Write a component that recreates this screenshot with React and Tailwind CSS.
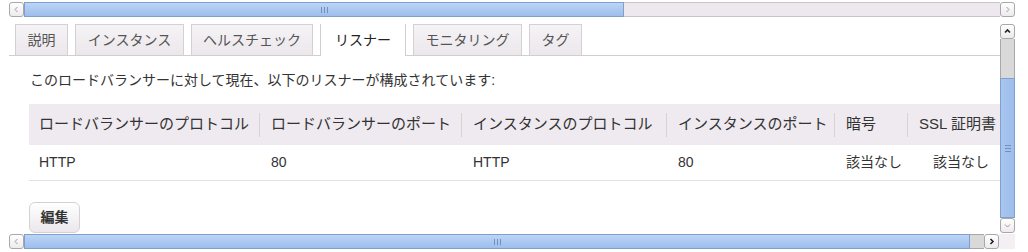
import React from 'react';

const tabs = [
  { label: '説明', w: 'w-[53px]' },
  { label: 'インスタンス', w: 'w-[109px]' },
  { label: 'ヘルスチェック', w: 'w-[122px]' },
  { label: 'リスナー', w: 'w-[86px]', active: true },
  { label: 'モニタリング', w: 'w-[109px]' },
  { label: 'タグ', w: 'w-[53px]' },
];

const headers = [
  'ロードバランサーのプロトコル',
  'ロードバランサーのポート',
  'インスタンスのプロトコル',
  'インスタンスのポート',
  '暗号',
  'SSL 証明書',
];

const row = ['HTTP', '80', 'HTTP', '80', '該当なし', '該当なし'];

const cols = 'grid grid-cols-[230px_202px_205px_168px_73px_140px]';

const ArrowBtn = ({ dir, dark }) => (
  <div className="w-[15px] h-[15px] shrink-0 bg-gradient-to-b from-white to-[#eeeaee] border border-[#a8a8a8] rounded-[3px] flex items-center justify-center">
    <svg width="7" height="7" viewBox="0 0 7 7" fill="none" stroke={dark ? '#222' : '#999'} strokeWidth={dark ? 1.6 : 1}>
      {dir === 'left' && <path d="M4.5 1 L2 3.5 L4.5 6" />}
      {dir === 'right' && <path d="M2.5 1 L5 3.5 L2.5 6" />}
      {dir === 'up' && <path d="M1 4.5 L3.5 2 L6 4.5" />}
      {dir === 'down' && <path d="M1 2.5 L3.5 5 L6 2.5" />}
    </svg>
  </div>
);

const Grip = ({ vertical }) => (
  <div className={`flex ${vertical ? 'flex-col' : ''} gap-[2px]`}>
    <div className={`${vertical ? 'w-[6px] h-px' : 'w-px h-[6px]'} bg-[#7090c0]`} />
    <div className={`${vertical ? 'w-[6px] h-px' : 'w-px h-[6px]'} bg-[#7090c0]`} />
    <div className={`${vertical ? 'w-[6px] h-px' : 'w-px h-[6px]'} bg-[#7090c0]`} />
  </div>
);

export default function App() {
  return (
    <div
      className="w-[1028px] h-[252px] bg-white overflow-hidden text-[#333]"
      style={{ fontFamily: "'Liberation Sans', 'Noto Sans CJK JP', sans-serif" }}
    >
      {/* top horizontal scrollbar */}
      <div className="pt-[2px] pl-[9px] w-[1015px] flex h-[17px]">
        <ArrowBtn dir="left" />
        <div className="w-[600px] h-[15px] bg-gradient-to-b from-[#bcd5f5] to-[#9dbdec] border border-[#7f9fcf] flex items-center justify-center">
          <Grip />
        </div>
        <div className="flex-1 h-[15px] bg-[#ede8ee] border-y border-[#c8c4c8]" />
        <ArrowBtn dir="right" />
      </div>

      <div className="flex h-[217px]">
        {/* content */}
        <div className="ml-[9px] w-[991px] overflow-hidden">
          <div className="mt-[7px] flex gap-[7px] pl-[6px] border-b border-[#cfcfcf] h-[32px]">
            {tabs.map((t) =>
              t.active ? (
                <div
                  key={t.label}
                  className={`${t.w} h-[32px] bg-white border-x border-[#cfcfcf] text-[14px] text-[#222] flex items-center justify-center -mb-px`}
                >
                  {t.label}
                </div>
              ) : (
                <div
                  key={t.label}
                  className={`${t.w} h-[31px] bg-gradient-to-b from-[#f6f3f6] to-[#ebe7eb] border-x border-t border-[#d4d0d4] text-[14px] text-[#555] flex items-center justify-center`}
                >
                  {t.label}
                </div>
              )
            )}
          </div>

          <div className="px-[20px]">
            <p className="mt-[14px] text-[14px] leading-[20px] pl-px">
              このロードバランサーに対して現在、以下のリスナーが構成されています:
            </p>

            <div className="mt-[14px] w-[1000px]">
              <div className={`${cols} h-[41px] bg-[#eeeaef] items-center text-[15px]`}>
                {headers.map((h, i) => (
                  <div key={h} className={`flex items-center h-[24px] ${i > 0 ? 'border-l border-[#d6d2d6] pl-[11px]' : 'pl-[10px]'}`}>
                    <span className="whitespace-nowrap">{h}</span>
                  </div>
                ))}
              </div>
              <div className={`${cols} h-[36px] items-center text-[14px] border-b border-[#e2e2e2]`}>
                {row.map((v, i) => (
                  <div key={i} className={`whitespace-nowrap ${i === 0 ? 'pl-[10px]' : i === 5 ? 'pl-[26px]' : 'pl-[12px]'}`}>
                    {v}
                  </div>
                ))}
              </div>
            </div>

            <button className="mt-[21px] w-[51px] h-[31px] rounded-[6px] border border-[#d4d0d4] bg-gradient-to-b from-white to-[#ebe7eb] text-[14px] font-bold text-[#333]">
              編集
            </button>
          </div>
        </div>

        {/* vertical scrollbar */}
        <div className="mt-[7px] w-[15px] h-[209px] flex flex-col">
          <ArrowBtn dir="up" dark />
          <div className="h-[39px] bg-[#d9d9d9] border-x border-[#a8a8a8]" />
          <div className="flex-1 bg-gradient-to-r from-[#a9c6f0] to-[#9dbdec] border border-[#7f9fcf] flex items-center justify-center">
            <Grip vertical />
          </div>
          <ArrowBtn dir="down" />
        </div>
      </div>

      {/* bottom horizontal scrollbar */}
      <div className="pl-[9px] w-[1015px] flex h-[15px]">
        <ArrowBtn dir="left" />
        <div className="w-[946px] h-[15px] bg-gradient-to-b from-[#bcd5f5] to-[#9dbdec] border border-[#7f9fcf] flex items-center justify-center">
          <Grip />
        </div>
        <div className="w-[14px] h-[15px] bg-[#d9d9d9] border-y border-[#a8a8a8]" />
        <ArrowBtn dir="right" dark />
        <div className="flex-1 h-[15px] bg-[#f3eff3]" />
      </div>
    </div>
  );
}
